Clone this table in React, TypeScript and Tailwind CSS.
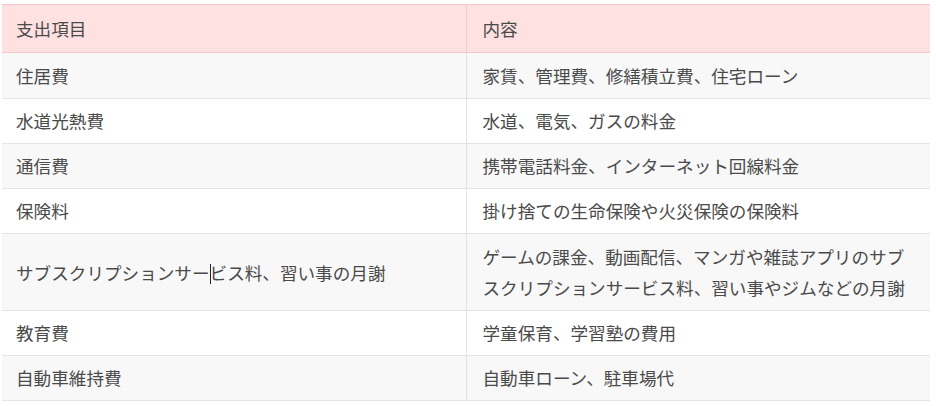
const rows = [
  { item: "住居費", detail: "家賃、管理費、修繕積立費、住宅ローン" },
  { item: "水道光熱費", detail: "水道、電気、ガスの料金" },
  { item: "通信費", detail: "携帯電話料金、インターネット回線料金" },
  { item: "保険料", detail: "掛け捨ての生命保険や火災保険の保険料" },
  {
    item: "サブスクリプションサービス料、習い事の月謝",
    detail: "ゲームの課金、動画配信、マンガや雑誌アプリのサブ",
    detail2: "スクリプションサービス料、習い事やジムなどの月謝",
  },
  { item: "教育費", detail: "学童保育、学習塾の費用" },
  { item: "自動車維持費", detail: "自動車ローン、駐車場代" },
];

export default function App() {
  return (
    <div className="w-[936px] h-[406px] bg-white pt-1 pl-[2px] font-['Noto_Sans_CJK_JP',sans-serif] text-[17.6px] text-[#4a4a4a]">
      <table className="w-[928px] table-fixed border-collapse">
        <thead>
          <tr className="bg-[#ffe1e2]">
            <th className="w-1/2 border-t border-b border-r border-[#f6c6c8] px-[14px] py-[8.5px] text-left font-normal leading-[30px]">
              支出項目
            </th>
            <th className="w-1/2 border-t border-b border-[#f6c6c8] px-[16px] py-[8.5px] text-left font-normal leading-[30px]">
              内容
            </th>
          </tr>
        </thead>
        <tbody>
          {rows.map((row, i) => (
            <tr
              key={i}
              className={`border-b border-[#e3e3e3] ${i % 2 === 0 ? "bg-[#f8f8f8]" : "bg-white"} ${
                i === 4 ? "leading-[31px]" : "leading-[30px]"
              }`}
            >
              <td
                className={`border-r border-[#e3e3e3] px-[14px] align-middle ${
                  i === 0 ? "pt-[8px] pb-[7px]" : "py-[7px]"
                }`}
              >
                {i === 4 ? (
                  <>
                    サブスクリプションサー
                    <span className="inline-block w-px h-[20px] -mr-px bg-[#222] align-[-4px]" />
                    ビス料、習い事の月謝
                  </>
                ) : (
                  row.item
                )}
              </td>
              <td
                className={`px-[16px] align-middle ${
                  i === 0 ? "pt-[8px] pb-[7px]" : "py-[7px]"
                }`}
              >
                {row.detail}
                {row.detail2 && (
                  <>
                    <br />
                    {row.detail2}
                  </>
                )}
              </td>
            </tr>
          ))}
        </tbody>
      </table>
    </div>
  );
}
